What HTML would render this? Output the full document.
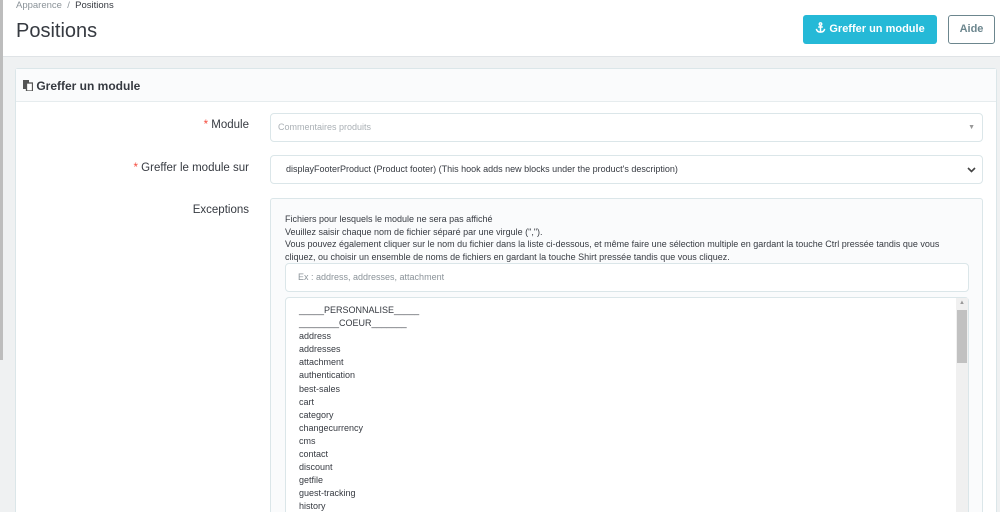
<!DOCTYPE html>
<html style="overflow:hidden;height:512px"><head><meta charset="utf-8"><style>
*{box-sizing:border-box;margin:0;padding:0}
body{width:1000px;height:512px;overflow:hidden;background:#eff1f2;font-family:"Liberation Sans",sans-serif;color:#363a41;position:relative}
.abs{position:absolute}
.hdr{left:0;top:0;width:1000px;height:57px;background:#fff;border-bottom:1px solid #dfe3e6}
.strip{left:0;top:0;width:3px;height:360px;background:#bdbdbd}
.card{left:15px;top:68px;width:982px;height:444px;background:#fff;border:1px solid #dbe6e9;border-bottom:none;border-radius:3px 3px 0 0}
.ch{left:16px;top:69px;width:980px;height:33px;background:#fafbfc;border-bottom:1px solid #e6ecee}
.lbl{font-size:11.5px;color:#363a41;text-align:right;width:240px;left:9px}
.lbl b{color:#f54c3e;font-weight:normal}
.inp{border:1px solid #dbe6e9;border-radius:4px;background:#fff;font-size:9px}
.list div{height:13.1px;line-height:13.1px}
</style></head><body>
<div class="abs hdr"></div>
<div class="abs strip"></div>
<div class="abs" style="left:16px;top:0;font-size:9.5px;color:#8b9399">Apparence &nbsp;/&nbsp; <span style="color:#363a41">Positions</span></div>
<div class="abs" style="left:16px;top:20px;font-size:20px;color:#363a41">Positions</div>
<div class="abs" style="left:803px;top:15px;width:134px;height:29px;background:#25b9d7;border-radius:3px;color:#fff;font-size:11px;font-weight:bold;line-height:29px;text-align:center">
<svg width="11" height="11" viewBox="0 0 12 12" style="vertical-align:-1px"><g fill="none" stroke="#fff" stroke-width="1.6"><circle cx="6" cy="2.2" r="1.3"/><path d="M6 3.5V11M3.5 5.5h5M1.5 7.5Q2 11 6 11Q10 11 10.5 7.5"/></g></svg> Greffer un module</div>
<div class="abs" style="left:948px;top:15px;width:47px;height:29px;border:1px solid #6c868e;border-radius:3px;color:#6c868e;font-size:11px;font-weight:bold;line-height:27px;text-align:center;background:#fff">Aide</div>
<div class="abs card"></div>
<div class="abs ch"></div>
<div class="abs" style="left:23px;top:79px;font-size:12px;font-weight:bold;color:#363a41"><svg width="10" height="11" viewBox="0 0 10 11" style="vertical-align:-1px"><rect x="0" y="0" width="6" height="9" fill="#555"/><rect x="3.5" y="3" width="6" height="8" fill="#fff" stroke="#555" stroke-width="1.3"/></svg> Greffer un module</div>
<div class="abs lbl" style="top:119px"><b>*</b> Module</div>
<div class="abs inp" style="left:270px;top:113px;width:713px;height:29px;color:#aab0b5;line-height:27px;padding-left:7px">Commentaires produits<span style="position:absolute;right:7px;top:0;color:#999;font-size:7px">▼</span></div>
<div class="abs lbl" style="top:162px"><b>*</b> Greffer le module sur</div>
<div class="abs inp" style="left:270px;top:155px;width:713px;height:29px;color:#363a41;line-height:27px;padding-left:15px">displayFooterProduct (Product footer) (This hook adds new blocks under the product's description)<svg class="abs" style="right:6px;top:11px" width="9" height="6" viewBox="0 0 9 6"><path d="M1 1l3.5 3.5L8 1" fill="none" stroke="#444" stroke-width="1.6"/></svg></div>
<div class="abs lbl" style="top:204px">Exceptions</div>
<div class="abs" style="left:270px;top:198px;width:713px;height:330px;background:#fafbfc;border:1px solid #dbe6e9;border-radius:3px"></div>
<div class="abs" style="left:285px;top:213px;width:680px;font-size:9px;line-height:12.7px;color:#363a41">Fichiers pour lesquels le module ne sera pas affiché<br>Veuillez saisir chaque nom de fichier séparé par une virgule (",").<br>Vous pouvez également cliquer sur le nom du fichier dans la liste ci-dessous, et même faire une sélection multiple en gardant la touche Ctrl pressée tandis que vous cliquez, ou choisir un ensemble de noms de fichiers en gardant la touche Shirt pressée tandis que vous cliquez.</div>
<div class="abs inp" style="left:285px;top:263px;width:684px;height:29px;color:#8b9399;line-height:27px;padding-left:12px">Ex : address, addresses, attachment</div>
<div class="abs inp" style="left:285px;top:297px;width:684px;height:230px"></div>
<div class="abs" style="left:956px;top:298px;width:12px;height:220px;background:#f0f0f0"></div>
<div class="abs" style="left:957px;top:310px;width:10px;height:53px;background:#c1c1c1"></div>
<div class="abs" style="left:959px;top:300px;font-size:6px;color:#999">▲</div>
<div class="abs list" style="left:299px;top:304px;font-size:9px;color:#363a41">
<div>_____PERSONNALISE_____</div><div>________COEUR_______</div><div>address</div><div>addresses</div><div>attachment</div><div>authentication</div><div>best-sales</div><div>cart</div><div>category</div><div>changecurrency</div><div>cms</div><div>contact</div><div>discount</div><div>getfile</div><div>guest-tracking</div><div>history</div></div>
</body></html>
